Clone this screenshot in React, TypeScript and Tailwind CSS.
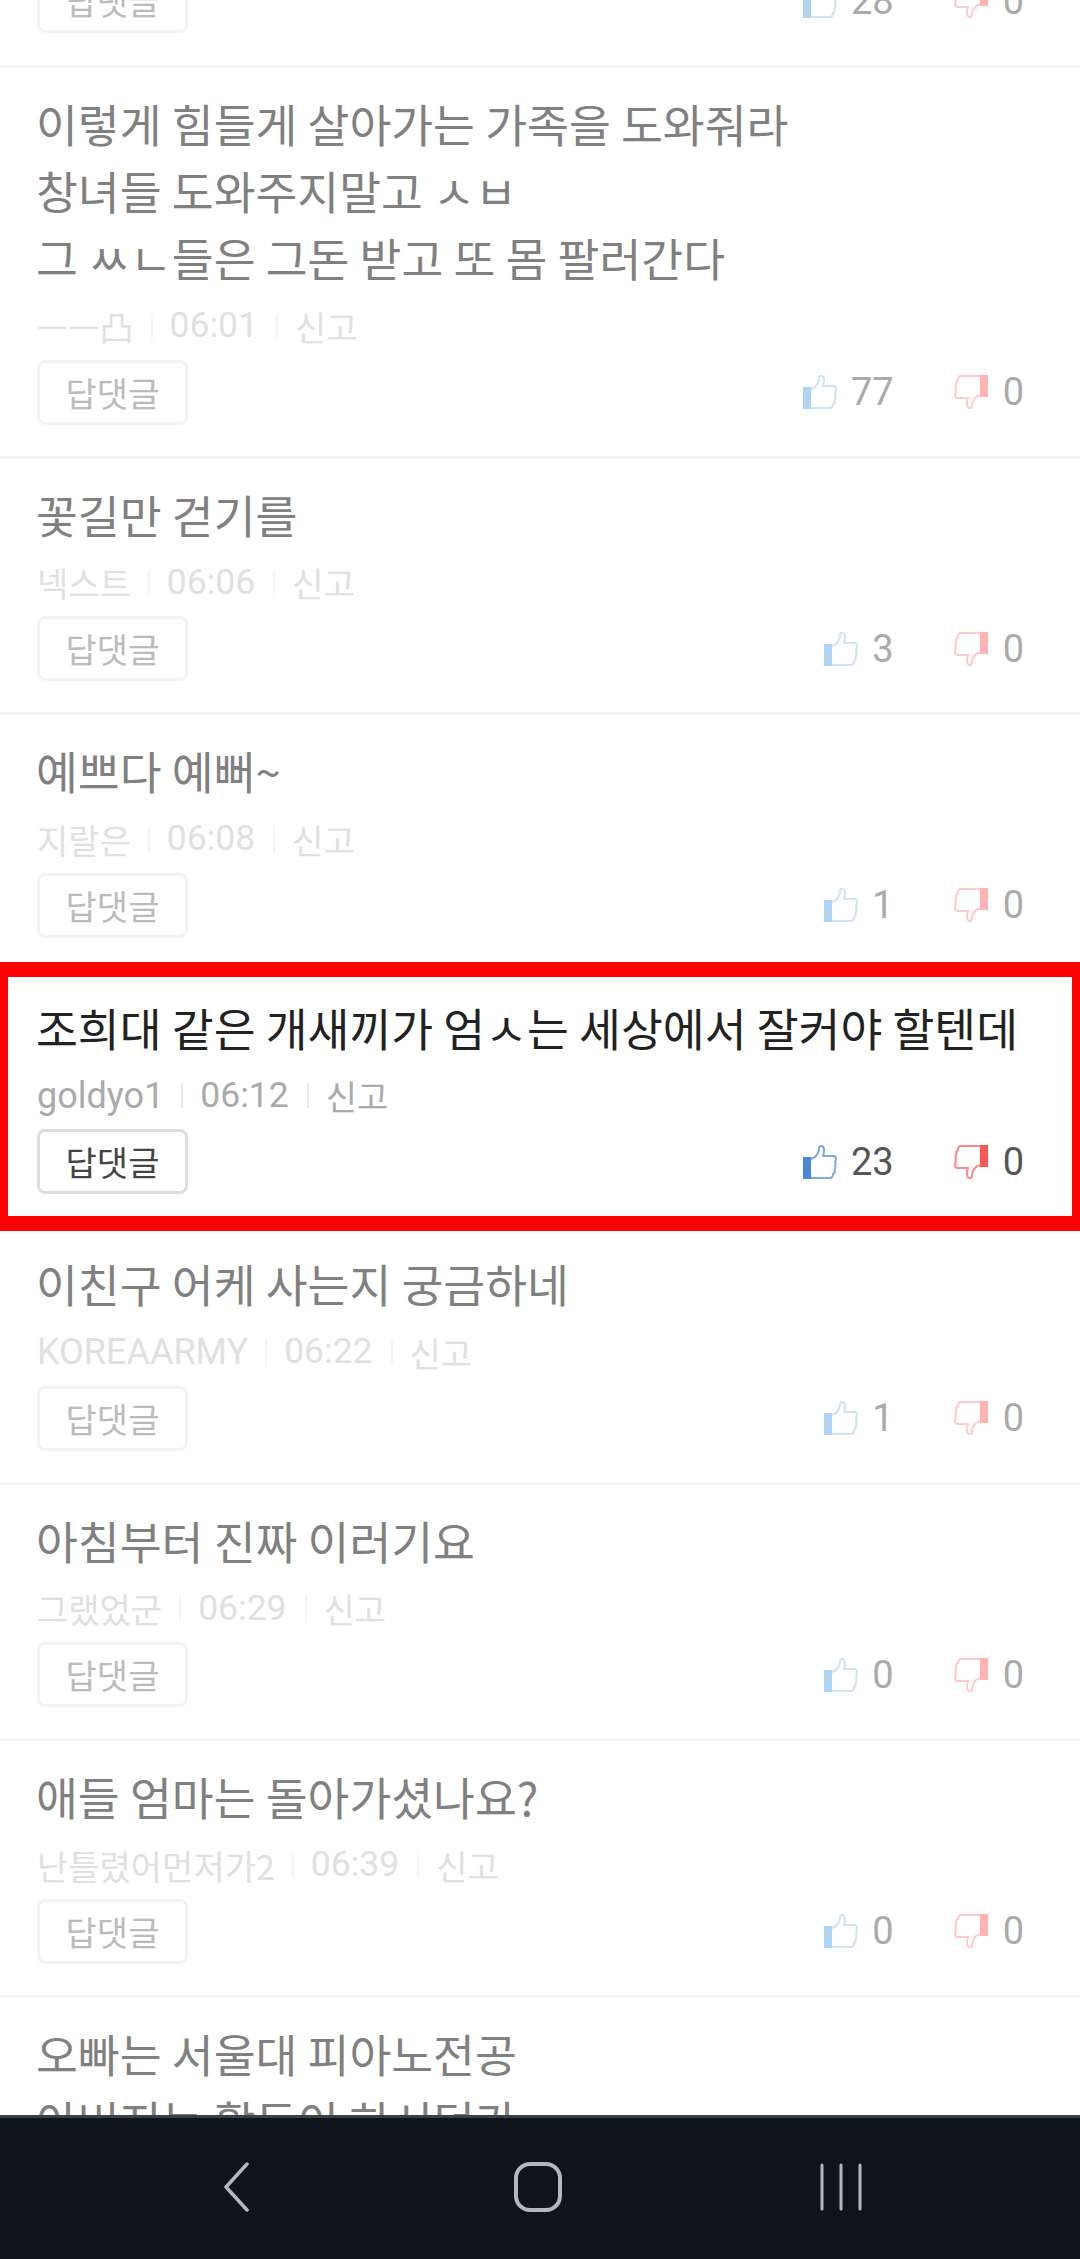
const titleFont = "font-['Noto_Sans_CJK_KR',sans-serif]"

interface Comment {
  lines: string[]
  author: string
  time: string
  likes: number
  dislikes: number
  active?: boolean
}

const comments: Comment[] = [
  {
    lines: ["이렇게 힘들게 살아가는 가족을 도와줘라", "창녀들 도와주지말고 ㅅㅂ", "그 ㅆㄴ들은 그돈 받고 또 몸 팔러간다"],
    author: "ㅡㅡ凸",
    time: "06:01",
    likes: 77,
    dislikes: 0,
  },
  { lines: ["꽃길만 걷기를"], author: "넥스트", time: "06:06", likes: 3, dislikes: 0 },
  { lines: ["예쁘다 예뻐~"], author: "지랄은", time: "06:08", likes: 1, dislikes: 0 },
  {
    lines: ["조희대 같은 개새끼가 엄ㅅ는 세상에서 잘커야 할텐데"],
    author: "goldyo1",
    time: "06:12",
    likes: 23,
    dislikes: 0,
    active: true,
  },
  { lines: ["이친구 어케 사는지 궁금하네"], author: "KOREAARMY", time: "06:22", likes: 1, dislikes: 0 },
  { lines: ["아침부터 진짜 이러기요"], author: "그랬었군", time: "06:29", likes: 0, dislikes: 0 },
  { lines: ["애들 엄마는 돌아가셨나요?"], author: "난틀렸어먼저가2", time: "06:39", likes: 0, dislikes: 0 },
]

function Thumb({ fill, stroke, down }: { fill: string; stroke: string; down?: boolean }) {
  return (
    <svg width="34" height="34" viewBox="0 0 34 34" className="shrink-0">
      <g transform={down ? "rotate(180 17 17)" : undefined}>
        <rect x="0" y="12" width="8" height="22" fill={fill} />
        <path
          d="M8 14 L12 12 Q16 8 16 3 Q16 1 18 1 Q21 1 21 5 Q21 9 20 11 L30 11 Q33 11 33 14 Q33 16 32 17 Q33 19 32 21 Q33 23 31.5 25 Q32.5 28 30 29 Q30 33 27 33 L8 33"
          fill="none"
          stroke={stroke}
          strokeWidth="2"
          strokeLinejoin="round"
        />
      </g>
    </svg>
  )
}

function Actions({ likes, dislikes, active }: { likes: number; dislikes: number; active?: boolean }) {
  const num = active ? "text-[#555555]" : "text-[#aaaaaa]"
  return (
    <div className="flex items-center justify-between">
      <button
        className={`h-[65px] w-[151px] rounded-[8px] border-[3px] bg-white text-[34px] ${titleFont} ${
          active ? "border-[#dddddd] text-[#444444]" : "border-[#f3f3f3] text-[#bbbbbb]"
        }`}
      >
        답댓글
      </button>
      <div className="flex items-center gap-[60px] font-['Roboto',sans-serif] text-[38px] leading-[40px]">
        <div className="flex items-center gap-[14px]">
          <Thumb fill={active ? "#4a86d8" : "#aed3f3"} stroke={active ? "#7ea9e4" : "#cfe2f6"} />
          <span className={num}>{likes}</span>
        </div>
        <div className="flex items-center gap-[15px]">
          <Thumb fill={active ? "#ff5555" : "#ffb3b3"} stroke={active ? "#ff8888" : "#ffcaca"} down />
          <span className={num}>{dislikes}</span>
        </div>
      </div>
    </div>
  )
}

function CommentItem({ comment }: { comment: Comment }) {
  const { lines, author, time, likes, dislikes, active } = comment
  const meta = active ? "text-[#aaaaaa]" : "text-[#e0e0e0]"
  const bar = active ? "bg-[#e8e8e8]" : "bg-[#f4f4f4]"
  // hangul nicknames come out smaller than latin ones
  const authorSize = /^[\x00-\x7f]+$/.test(author) ? "text-[36px]" : `text-[34px] ${titleFont}`
  return (
    <div className={`relative border-b-[3px] pl-[37px] pr-[56px] pt-[22px] pb-[31px] ${active ? "border-transparent" : "border-[#f4f4f4]"}`}>
      <div className={`-ml-[1px] ${titleFont} text-[45.5px] leading-[67px] ${active ? "text-[#222222]" : "text-[#808080]"}`}>
        {lines.map((line) => (
          <div key={line} className="whitespace-nowrap">
            {line}
          </div>
        ))}
      </div>
      <div className={`mt-[12px] mb-[10.5px] flex h-[46px] items-center font-['Roboto',sans-serif] text-[35.5px] ${meta}`}>
        <span className={authorSize}>{author}</span>
        <span className={`ml-[17px] mr-[17px] h-[25px] w-[2px] ${bar}`} />
        <span>{time}</span>
        <span className={`ml-[18px] mr-[17px] h-[25px] w-[2px] ${bar}`} />
        <span className={`text-[34px] ${titleFont}`}>신고</span>
      </div>
      <Actions likes={likes} dislikes={dislikes} active={active} />
      {active && (
        <div className="pointer-events-none absolute inset-x-0 top-[-9.5px] bottom-[-6px] border-x-[8px] border-y-[15px] border-[#ff0000]" />
      )}
    </div>
  )
}

export default function App() {
  return (
    <div className="flex h-[2259px] w-[1080px] flex-col overflow-hidden bg-white">
      <div className="flex-1 overflow-hidden">
        <div className="-mt-[32px]">
          <div className="border-b-[3px] border-[#f4f4f4] pl-[37px] pr-[56px] pb-[32px]">
            <Actions likes={28} dislikes={0} />
          </div>
          {comments.map((comment) => (
            <CommentItem key={comment.time} comment={comment} />
          ))}
          <div className="pl-[37px] pt-[22px]">
            <div className={`-ml-[1px] ${titleFont} text-[45.5px] leading-[67px] text-[#808080]`}>
              <div>오빠는 서울대 피아노전공</div>
              <div>아버지는 활동이 하시던가</div>
            </div>
          </div>
        </div>
      </div>
      <nav className="flex h-[144px] items-center justify-center border-t-[3px] border-[#3a4046] bg-[#0e151a] pb-[3px] pl-[6px]">
        <svg width="26" height="50" viewBox="0 0 26 50" fill="none" stroke="#b4b8ba" strokeWidth="3.5" strokeLinecap="round" strokeLinejoin="round">
          <path d="M24 2 L3 25 L24 48" />
        </svg>
        <svg className="ml-[265px]" width="48" height="50" viewBox="0 0 48 50" fill="none" stroke="#b4b8ba" strokeWidth="4">
          <rect x="2" y="2" width="44" height="46" rx="14" />
        </svg>
        <svg className="ml-[257px]" width="44" height="48" viewBox="0 0 44 48" fill="none" stroke="#b4b8ba" strokeWidth="3" strokeLinecap="round">
          <path d="M3 2 V46 M22 2 V46 M41 2 V46" />
        </svg>
      </nav>
    </div>
  )
}
